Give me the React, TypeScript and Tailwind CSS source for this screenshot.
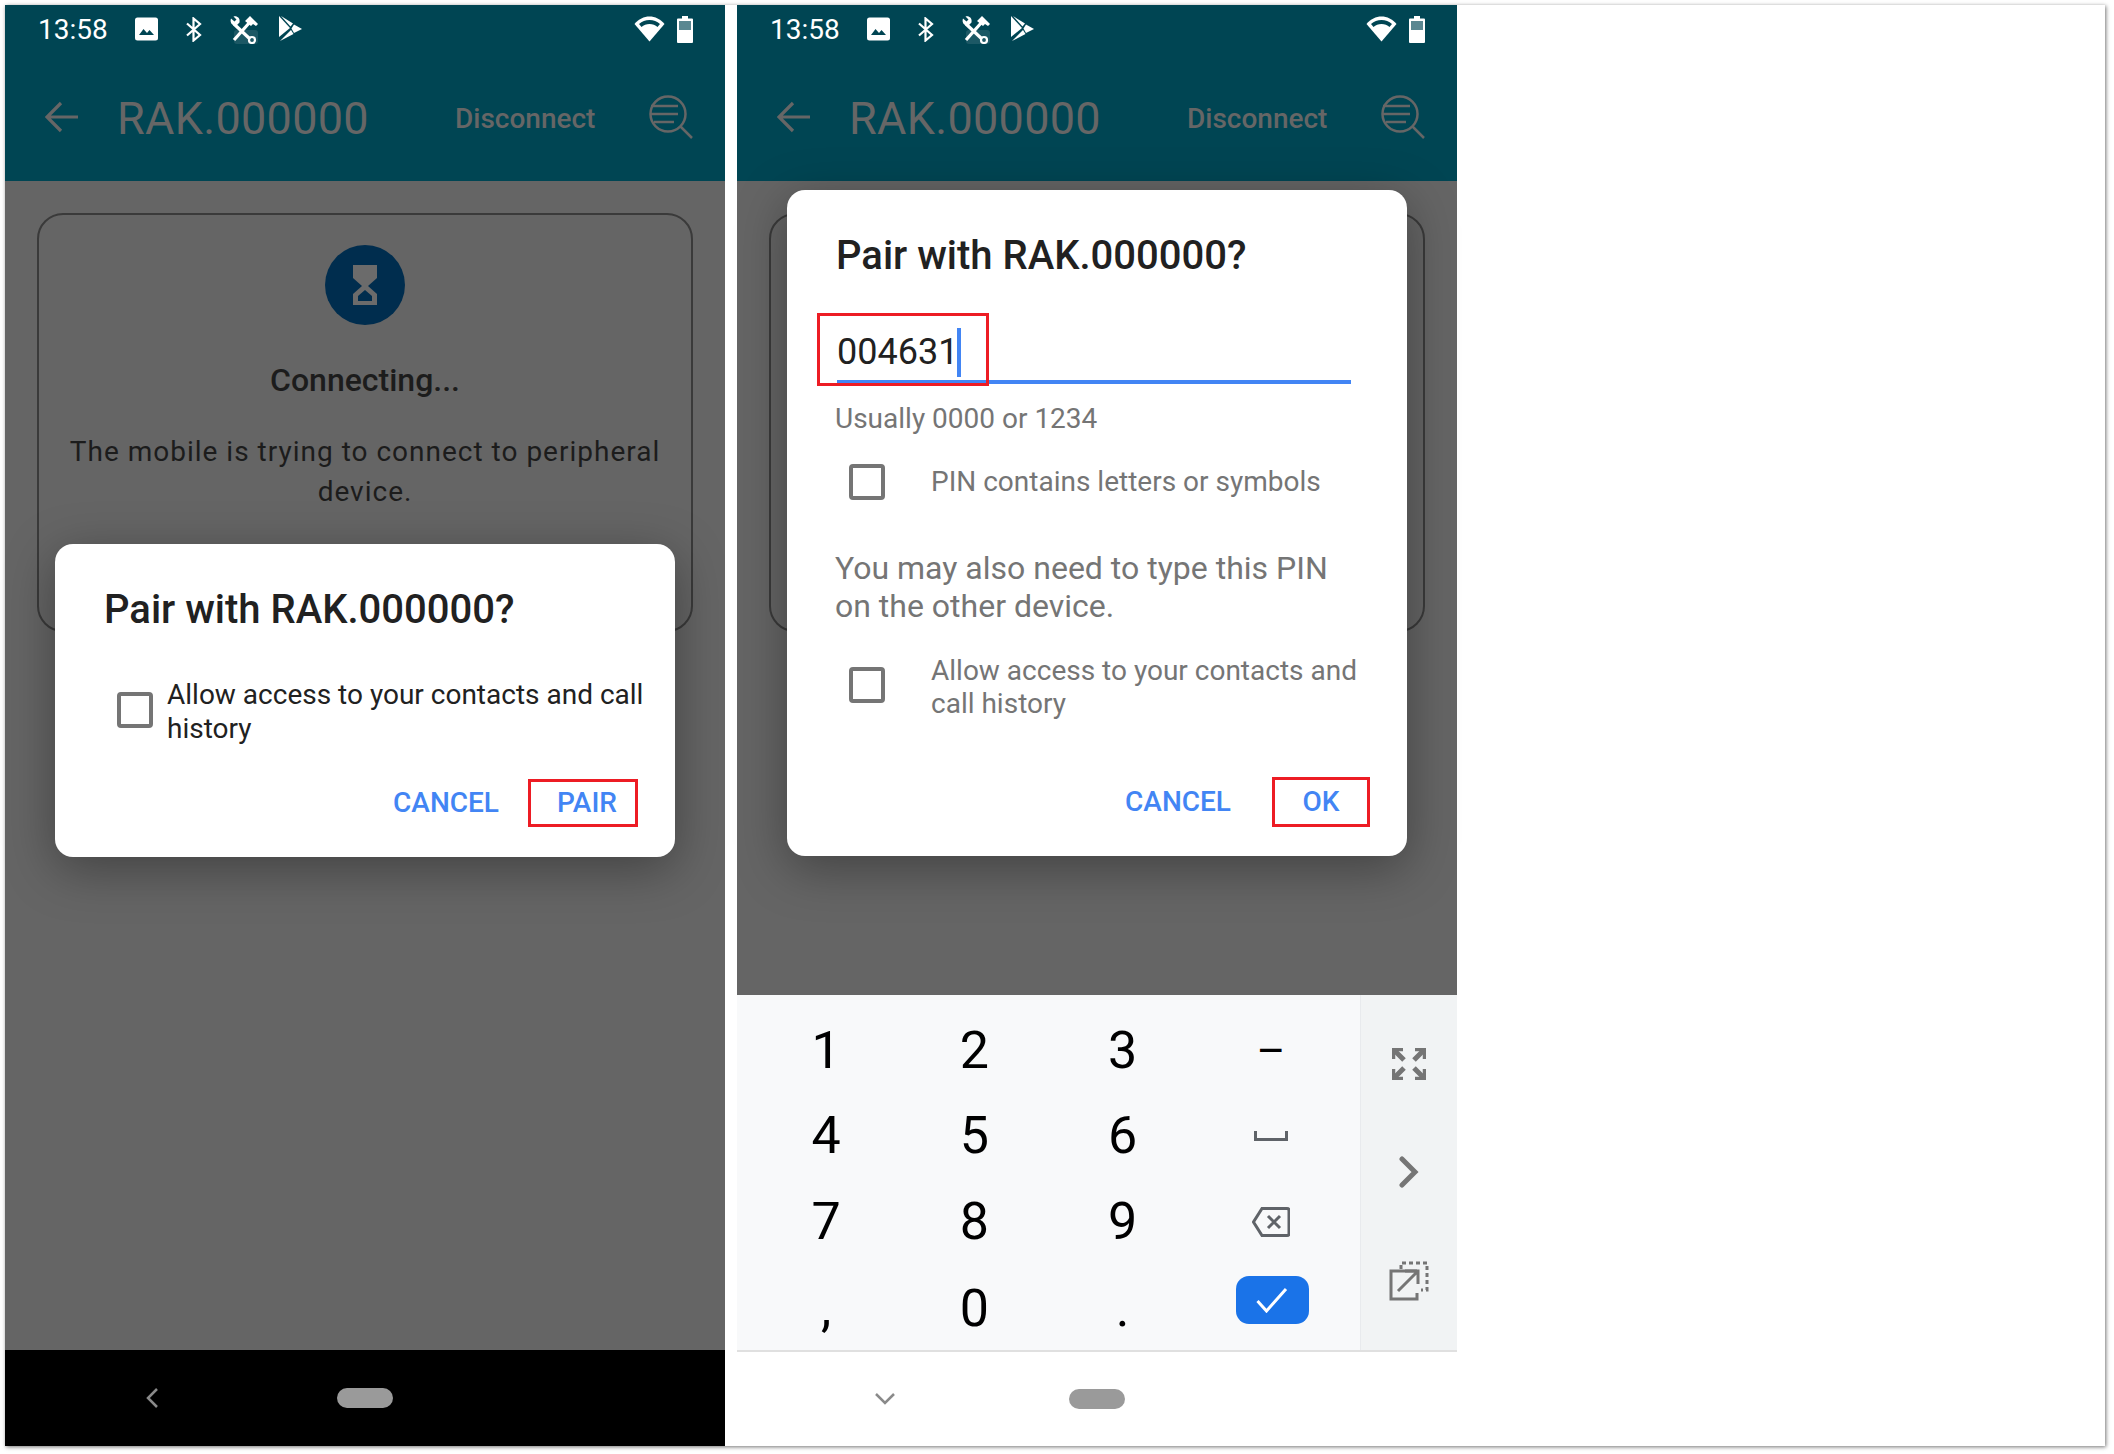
import type { ReactNode } from "react";

function StatusIcons() {
  return (
    <div className="flex items-center h-[48px] pl-[33px] pr-[32px] text-white">
      <span className="text-[28px] leading-[48px] pt-[2px] w-[70px]">13:58</span>
      {/* picture */}
      <svg className="ml-[27px]" width="23" height="24" viewBox="0 0 23 24">
        <rect x="0" y="0.5" width="23" height="23" rx="2.5" fill="#fff" />
        <path d="M4 18l4.5-6 3.5 4 2.5-3 4.5 5z" fill="#004553" />
      </svg>
      {/* bluetooth */}
      <svg className="ml-[28px]" width="16" height="25" viewBox="0 0 16 25" fill="none" stroke="#fff" strokeWidth="2.2">
        <path d="M1 6.5l13 11.5-6.5 5.5V1.5L14 7 1 18.5" />
      </svg>
      {/* tools */}
      <svg className="ml-[27px]" width="29" height="29" viewBox="0 0 29 29">
        <rect x="5" y="15" width="24" height="14" rx="3" fill="#2f6572" opacity="0.6" />
        <path d="M5 25L21 7" stroke="#fff" strokeWidth="3.2" />
        <path d="M16 6l5-5 8 8-2 2-3-2-2 2z" fill="#fff" />
        <path d="M5 9l16 15" stroke="#fff" strokeWidth="3.2" />
        <path d="M2 3.5l3.5 3 2-2-3-3c3-1 7 1 6 6l-3 3c-4 1-7-3-5.500-7z" fill="#fff" />
        <circle cx="23" cy="25" r="3" fill="none" stroke="#fff" strokeWidth="2.200" />
      </svg>
      {/* play store */}
      <svg className="ml-[21px]" width="23" height="26" viewBox="0 0 23 26">
        <path d="M0 0l11 12L0 21z" fill="#fff" />
        <path d="M2 0l12 7.500-2.500 3z" fill="#fff" />
        <path d="M15 8.500l8 4.500-8 4-2.500-4.500z" fill="#fff" />
        <path d="M1 25l11-11 2.500 4z" fill="#fff" />
      </svg>
      <div className="flex-1" />
      {/* wifi */}
      <svg width="31" height="26" viewBox="0 0 31 26">
        <path d="M15.500 25.500L0.500 8C4.500 3 10 0.500 15.500 0.500S26.500 3 30.500 8z" fill="#fff" />
        <path d="M5 8c3-2.500 6.500-4 10.500-4S23 5.500 26 8l-2.500 3c-2-1.800-5-3-8-3s-6 1.200-8 3z" fill="#004553" />
      </svg>
      {/* battery */}
      <div className="ml-[12px] w-[16px] h-[27px] relative">
        <svg width="16" height="27" viewBox="0 0 16 27">
          <path d="M5 0h6v2.500h4a1 1 0 011 1V26a1 1 0 01-1 1H1a1 1 0 01-1-1V3.500a1 1 0 011-1h4z" fill="#fff" />
          <rect x="2" y="5" width="12" height="9" fill="#5a8791" />
        </svg>
      </div>
    </div>
  );
}

function Toolbar() {
  return (
    <div className="flex items-center h-[128px] pt-[3px] text-[#666666]">
      <svg className="ml-[40px] -mt-[3px]" width="33" height="32" viewBox="0 0 33 32" fill="none" stroke="#666666" strokeWidth="3.2">
        <path d="M33 16H3M16 2L2 16l14 14" />
      </svg>
      <span className="ml-[39px] text-[45px] leading-none w-[338px] tracking-[0.3px]">RAK.000000</span>
      <span className="text-[28px] font-medium leading-none w-[194px]">Disconnect</span>
      <svg className="-mt-[3px]" width="44" height="44" viewBox="0 0 44 44" fill="none" stroke="#666666" strokeWidth="2.500">
        <circle cx="19" cy="19" r="17.500" />
        <path d="M2 11h27M2 19h27M5 27h20M31 31l12 12" />
      </svg>
    </div>
  );
}

function BackgroundCard() {
  return (
    <div className="mx-[32px] mt-[32px] h-[419px] rounded-[26px] border-2 border-[#3a3a3a] flex flex-col items-center">
      <div className="mt-[30px] w-[80px] h-[80px] rounded-full bg-[#002d4e] flex items-center justify-center">
        <svg width="26" height="40" viewBox="0 0 26 40">
          <path fillRule="evenodd" d="M1 0h24v13L16 21l9 8v11H1V29l9-8-9-8zM13 25l-7 6v5h14v-5z" fill="#6b6b6b" />
        </svg>
      </div>
      <p className="mt-[33px] text-[32px] font-medium leading-[44px] text-[#1c1c1c]">Connecting...</p>
      <p className="mt-[30px] w-[620px] text-center text-[28px] leading-[40px] tracking-[1px] text-[#1c1c1c]">
        The mobile is trying to connect to peripheral device.
      </p>
    </div>
  );
}

function Checkbox() {
  return <div className="w-[36px] h-[36px] shrink-0 rounded-[4px] border-[4px] border-[#757575]" />;
}

function Dialog({ top, children }: { top: string; children: ReactNode }) {
  return (
    <div className={`absolute left-[50px] ${top} w-[620px] bg-white rounded-[18px] shadow-[0_12px_50px_rgba(0,0,0,0.35)]`}>
      {children}
    </div>
  );
}

function Phone({ children, nav }: { children: ReactNode; nav: ReactNode }) {
  return (
    <div className="w-[720px] h-full flex flex-col">
      <div className="bg-[#004553]">
        <StatusIcons />
        <Toolbar />
      </div>
      {children}
      {nav}
    </div>
  );
}

function Key({ children }: { children: ReactNode }) {
  return <div className="flex items-center justify-center text-[52px] leading-none text-black">{children}</div>;
}

function Keyboard() {
  return (
    <div className="h-[357px] flex border-b-2 border-[#e0e0e0]">
      <div className="w-[624px] bg-[#f8f9fa] border-r border-[#e8eaed] pl-[15px] pr-[15px] pt-[13px] grid grid-cols-4 grid-rows-4">
        <Key>1</Key>
        <Key>2</Key>
        <Key>3</Key>
        <Key>
          <span className="text-[44px]">–</span>
        </Key>
        <Key>4</Key>
        <Key>5</Key>
        <Key>6</Key>
        <Key>
          <svg width="34" height="10" viewBox="0 0 34 10" fill="none" stroke="#5f6368" strokeWidth="3">
            <path d="M1.500 0v8.500h31V0" />
          </svg>
        </Key>
        <Key>7</Key>
        <Key>8</Key>
        <Key>9</Key>
        <Key>
          <svg width="38" height="30" viewBox="0 0 38 30" fill="none" stroke="#5f6368" strokeWidth="3">
            <path d="M10 1.500h25a2 2 0 012 2v23a2 2 0 01-2 2H10L1.500 15z" />
            <path d="M16 9l12 12M28 9L16 21" />
          </svg>
        </Key>
        <Key>
          <span className="pt-[3px]">,</span>
        </Key>
        <Key>
          <span className="pt-[3px]">0</span>
        </Key>
        <Key>
          <span className="pt-[3px]">.</span>
        </Key>
        <Key>
          <div className="-mt-[14px] ml-[3px] w-[73px] h-[48px] rounded-[13px] bg-[#1a73e8] flex items-center justify-center">
            <svg width="32" height="26" viewBox="0 0 32 26" fill="none" stroke="#fff" strokeWidth="3">
              <path d="M1.500 14l9 10L30 2" />
            </svg>
          </div>
        </Key>
      </div>
      <div className="flex-1 bg-[#f1f3f4] flex flex-col items-center">
        <svg className="mt-[53px]" width="34" height="32" viewBox="0 0 34 32" fill="none" stroke="#757575">
          <path d="M1.500 11V1.500H11M23 1.500h9.500V11M1.500 21v9.500H11M32.500 21v9.500H23" strokeWidth="3.500" />
          <path d="M3 3l9 9M31 3l-9 9M3 29l9-9M31 29l-9-9" strokeWidth="5" />
        </svg>
        <svg className="mt-[76px]" width="20" height="32" viewBox="0 0 20 32" fill="none" stroke="#757575" strokeWidth="5" strokeLinecap="round">
          <path d="M3 3l13 13L3 29" />
        </svg>
        <svg className="mt-[73px]" width="40" height="40" viewBox="0 0 40 40" fill="none" stroke="#757575" strokeWidth="3">
          <path d="M28 10H2v28h26v-6" />
          <path d="M9 30L28 11M16 10h13v13" />
          <path d="M12 8V2h26v27h-6" strokeDasharray="4 3" />
        </svg>
      </div>
    </div>
  );
}

function Pill() {
  return <div className="w-[56px] h-[20px] rounded-full bg-[#9a9a9a]" />;
}

export default function App() {
  return (
    <div className="w-[2114px] h-[1454px] bg-white pt-[5px] pl-[5px] font-['Roboto',sans-serif]">
      <div className="w-[2100px] h-[1441px] flex gap-[12px] bg-white shadow-[1px_1px_4px_rgba(0,0,0,0.55)]">
        {/* Pair confirmation */}
        <Phone
          nav={
            <div className="h-[96px] bg-black flex items-center">
              <svg className="ml-[141px]" width="12" height="20" viewBox="0 0 12 20" fill="none" stroke="#8a8a8a" strokeWidth="2.500">
                <path d="M11 1L2 10l9 9" />
              </svg>
              <div className="ml-[179px]">
                <Pill />
              </div>
            </div>
          }
        >
          <div className="relative flex-1 bg-[#656565]">
            <BackgroundCard />
            <Dialog top="top-[363px]">
              <div className="h-[313px] pt-[42px]">
                <h2 className="ml-[49px] text-[40px] font-medium leading-[48px] text-[#212121]">Pair with RAK.000000?</h2>
                <div className="mt-[44px] ml-[62px] flex items-center">
                  <div className="-mt-[4px]">
                    <Checkbox />
                  </div>
                  <p className="ml-[14px] w-[500px] text-[28px] leading-[34px] text-[#212121]">
                    Allow access to your contacts and call history
                  </p>
                </div>
                <div className="mt-[33px] pr-[37px] flex justify-end items-center text-[28px] font-medium text-[#4285f4]">
                  <span>CANCEL</span>
                  <span className="ml-[29px] w-[110px] h-[48px] pl-[8px] border-[3px] border-[#ed1c24] flex items-center justify-center">PAIR</span>
                </div>
              </div>
            </Dialog>
          </div>
        </Phone>

        {/* PIN entry */}
        <Phone
          nav={
            <div className="h-[94px] bg-white flex items-center">
              <svg className="ml-[138px]" width="20" height="12" viewBox="0 0 20 12" fill="none" stroke="#8a8a8a" strokeWidth="2.500">
                <path d="M1 1l9 9 9-9" />
              </svg>
              <div className="ml-[174px]">
                <Pill />
              </div>
            </div>
          }
        >
          <div className="relative flex-1 bg-[#656565]">
            <BackgroundCard />
            <Dialog top="top-[9px]">
              <div className="h-[666px] pt-[42px]">
                <h2 className="ml-[49px] text-[40px] font-medium leading-[48px] text-[#212121]">Pair with RAK.000000?</h2>
                <div className="relative mt-[45px] ml-[50px] w-[514px]">
                  <div className="flex items-center h-[55px] pt-[2px] pb-[3px]">
                    <span className="text-[36px] leading-[50px] text-[#212121]">004631</span>
                    <span className="-ml-[1px] w-[4px] h-[49px] bg-[#4285f4]" />
                  </div>
                  <div className="h-[4px] bg-[#4285f4]" />
                  <div className="absolute -left-[20px] -top-[12px] w-[172px] h-[73px] border-[3px] border-[#ed1c24]" />
                </div>
                <p className="mt-[17px] ml-[48px] text-[28px] leading-[36px] text-[#757575]">Usually 0000 or 1234</p>
                <div className="mt-[25px] ml-[62px] flex items-center">
                  <Checkbox />
                  <p className="ml-[46px] text-[28px] leading-[40px] text-[#757575]">PIN contains letters or symbols</p>
                </div>
                <p className="mt-[47px] ml-[48px] w-[520px] text-[32px] leading-[38px] text-[#757575]">
                  You may also need to type this PIN on the other device.
                </p>
                <div className="mt-[29px] ml-[62px] flex items-center">
                  <div className="-mt-[5px]">
                    <Checkbox />
                  </div>
                  <p className="ml-[46px] w-[440px] text-[28px] leading-[33px] text-[#757575]">
                    Allow access to your contacts and call history
                  </p>
                </div>
                <div className="mt-[57px] pr-[37px] flex justify-end items-center text-[28px] font-medium text-[#4285f4]">
                  <span>CANCEL</span>
                  <span className="ml-[41px] w-[98px] h-[50px] border-[3px] border-[#ed1c24] flex items-center justify-center">OK</span>
                </div>
              </div>
            </Dialog>
          </div>
          <Keyboard />
        </Phone>
      </div>
    </div>
  );
}
